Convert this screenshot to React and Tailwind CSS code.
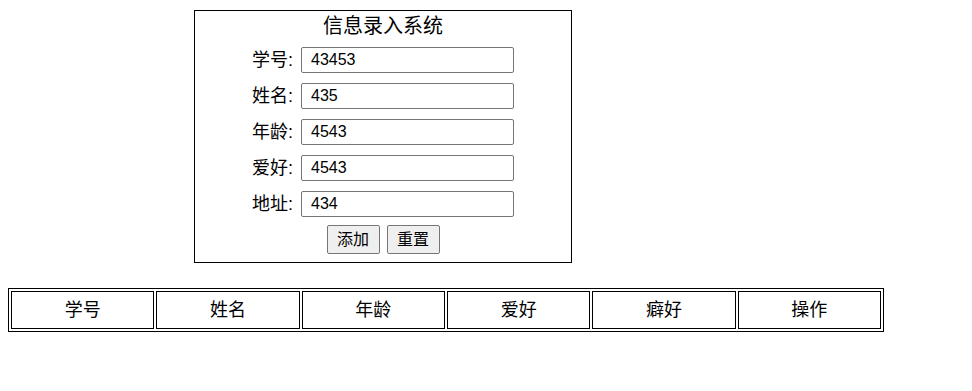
import { useState } from 'react';

const FONT = { fontFamily: '"Liberation Sans", "Noto Sans CJK SC", sans-serif' };

const FIELDS = [
    { key: 'id', label: '学号', value: '43453' },
    { key: 'name', label: '姓名', value: '435' },
    { key: 'age', label: '年龄', value: '4543' },
    { key: 'hobby', label: '爱好', value: '4543' },
    { key: 'addr', label: '地址', value: '434' },
];

const COLUMNS = ['学号', '姓名', '年龄', '爱好', '癖好', '操作'];

export default function App() {
    const [form, setForm] = useState(() => Object.fromEntries(FIELDS.map(f => [f.key, f.value])));

    return (
        <div className="min-h-[391px] bg-white text-black" style={FONT}>
            {/* Form box */}
            <div className="ml-[194px] pt-[10px]">
                <div className="w-[378px] h-[253px] border border-black flex flex-col items-center">
                    <h1 className="mt-[1px] h-[28px] text-[20px] leading-[28px]">信息录入系统</h1>
                    <div className="mt-[7px] flex flex-col gap-[10px]">
                        {FIELDS.map(f => (
                            <div key={f.key} className="flex items-center h-[26px]">
                                <label className="text-[18px] leading-[26px] mr-[8px]">{f.label}:</label>
                                <input
                                    value={form[f.key]}
                                    onChange={e => setForm(p => ({ ...p, [f.key]: e.target.value }))}
                                    className="w-[213px] h-[26px] border border-[#767676] rounded-[2px] pl-[9px] text-[16px] outline-none"
                                />
                            </div>
                        ))}
                    </div>
                    <div className="mt-[8px] flex gap-[7px]">
                        <button className="w-[53px] h-[29px] text-[16px] bg-[#efefef] border border-[#767676] rounded-[2px]">添加</button>
                        <button className="w-[53px] h-[29px] text-[16px] bg-[#efefef] border border-[#767676] rounded-[2px]">重置</button>
                    </div>
                </div>
            </div>

            {/* Table */}
            <div className="ml-[8px] mt-[25px]">
                <table className="w-[876px] border border-black border-separate border-spacing-[2px]">
                    <thead>
                        <tr>
                            {COLUMNS.map(c => (
                                <th key={c} className="h-[38px] pt-[1px] border border-black font-normal text-[18px] text-center">{c}</th>
                            ))}
                        </tr>
                    </thead>
                </table>
            </div>
        </div>
    );
}
